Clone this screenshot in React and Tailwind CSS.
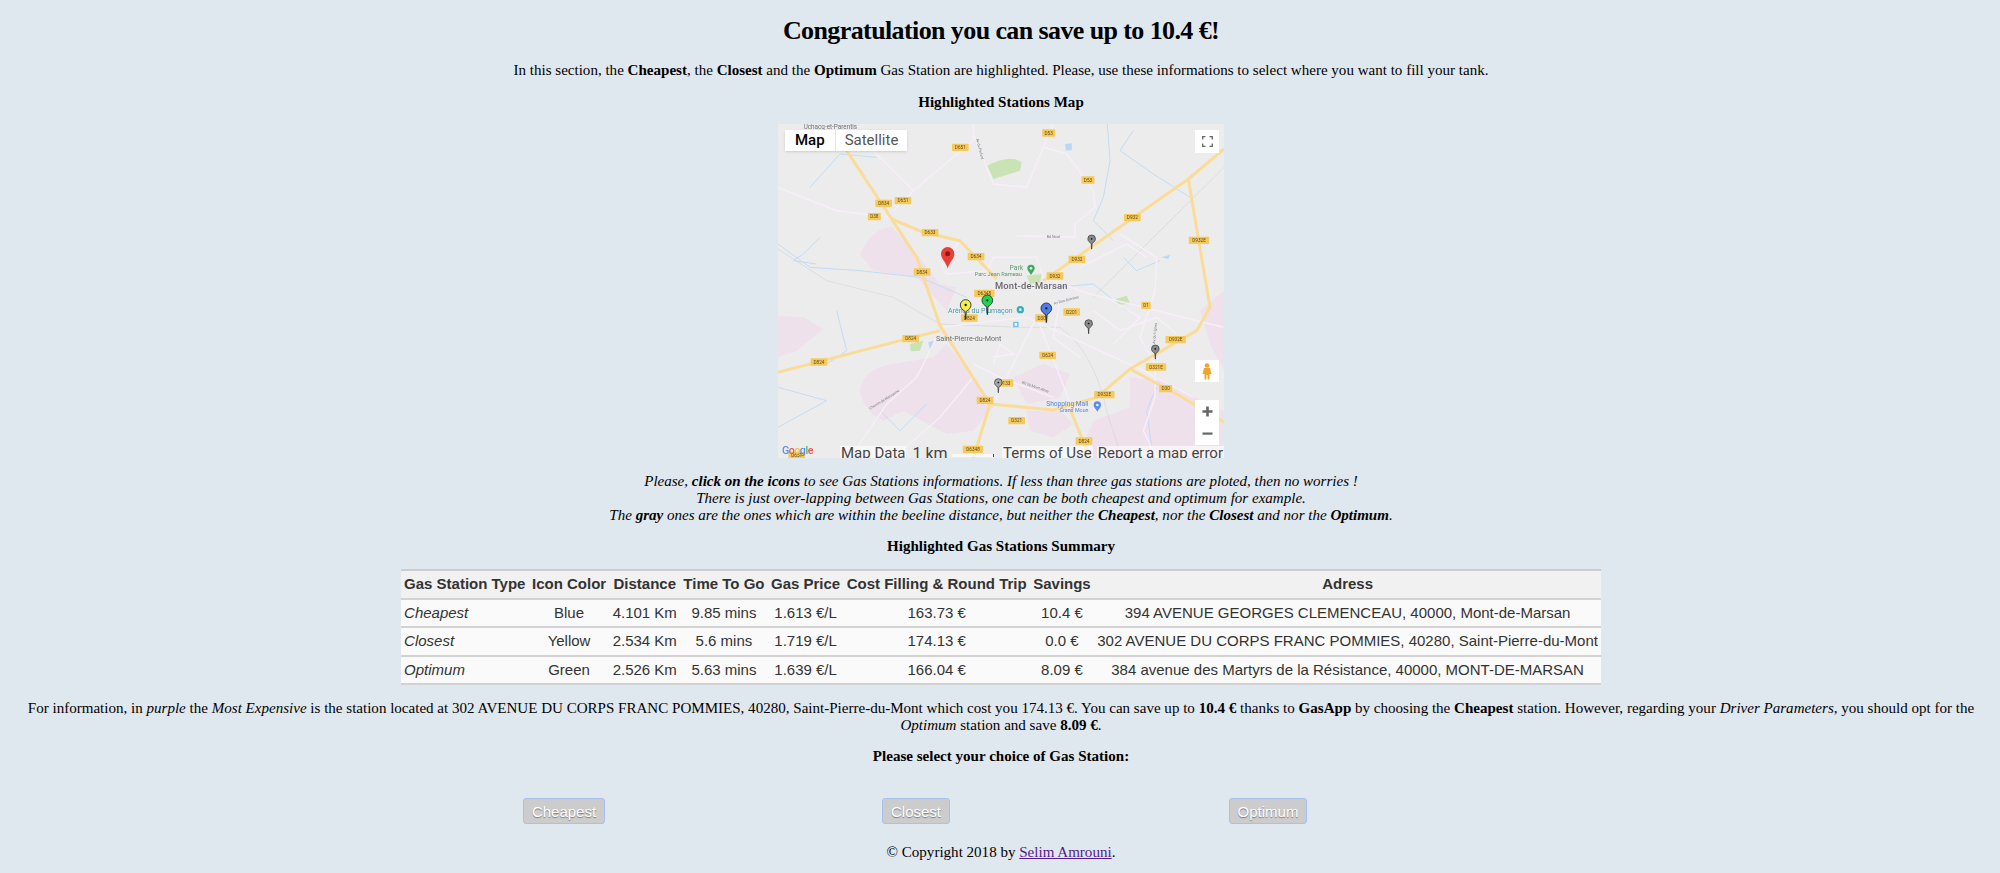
const rows = [
  ['Cheapest', 'Blue', '4.101 Km', '9.85 mins', '1.613 €/L', '163.73 €', '10.4 €', '394 AVENUE GEORGES CLEMENCEAU, 40000, Mont-de-Marsan'],
  ['Closest', 'Yellow', '2.534 Km', '5.6 mins', '1.719 €/L', '174.13 €', '0.0 €', '302 AVENUE DU CORPS FRANC POMMIES, 40280, Saint-Pierre-du-Mont'],
  ['Optimum', 'Green', '2.526 Km', '5.63 mins', '1.639 €/L', '166.04 €', '8.09 €', '384 avenue des Martyrs de la Résistance, 40000, MONT-DE-MARSAN'],
];
const heads = ['Gas Station Type', 'Icon Color', 'Distance', 'Time To Go', 'Gas Price', 'Cost Filling & Round Trip', 'Savings', 'Adress'];

// map is in 3x coordinates of the crop
const chips = [
  [601, 110, 'D651'], [866, 67, 'D53'], [984, 208, 'D53'], [371, 278, 'D834'], [429, 270, 'D651'], [343, 318, 'D38'],
  [510, 366, 'D633'], [648, 438, 'D634'], [486, 484, 'D834'], [951, 446, 'D932'], [885, 496, 'D932'], [1117, 321, 'D932'],
  [1317, 389, 'D932E'], [673, 548, 'D6348'], [935, 604, 'D201'], [1158, 584, 'D1'], [628, 622, 'D824'], [845, 622, 'D30'],
  [452, 684, 'D824'], [177, 754, 'D824'], [863, 734, 'D624'], [1247, 687, 'D932E'], [1188, 769, 'D321E'], [1217, 834, 'D30'],
  [735, 817, 'D133'], [1033, 852, 'D932E'], [675, 869, 'D824'], [770, 930, 'D321'], [972, 991, 'D824'], [639, 1016, 'D6348'], [110, 1034, 'D651'],
];

const pins = [
  [995, 378, '#8a8a8a', 0.72], [986, 632, '#8a8a8a', 0.72], [1186, 708, '#8a8a8a', 0.72], [715, 809, '#a5a5a5', 0.72],
  [617, 574, '#f4ee4e', 1], [682, 560, '#17d94f', 1], [859, 584, '#4f7de8', 1],
];

function GasMap() {
  return (
    <svg viewBox="54 40 1338 1002" className="block w-full h-full blur-[0.5px]" fontFamily="Roboto, sans-serif">
      <rect x="54" y="40" width="1338" height="1002" fill="#ececec" />

      <g fill="#eee1ec">
        <path d="M300 430 Q340 350 395 348 L470 430 L540 520 L590 530 L560 600 L470 500 L340 480 Z" />
        <path d="M54 615 L130 620 L190 655 L110 720 L54 740 Z" />
        <path d="M300 840 Q310 770 400 760 L520 740 L560 700 L640 800 L700 890 L690 900 L640 960 L560 970 L430 900 L370 930 Q310 900 300 840 Z" />
        <path d="M760 800 L850 760 L930 790 L900 860 L800 880 Z" />
        <path d="M800 900 L900 900 L940 940 L880 980 L810 960 Z" />
        <path d="M970 1000 L1000 930 L1110 890 L1110 800 L1200 810 L1392 900 L1392 1042 L1000 1042 Z" />
        <path d="M1320 600 L1392 540 L1392 780 L1350 700 Z" />
      </g>

      <g fill="#c9e3b5">
        <path d="M682 165 Q750 130 785 155 L780 180 L700 205 Z" />
        <path d="M450 700 L490 690 L480 720 L452 722 Z" />
        <path d="M1068 565 L1100 555 L1110 580 L1070 582 Z" />
        <path d="M800 495 L845 490 L840 515 L810 520 Z" />
      </g>

      <g fill="#b9d8f6">
        <path d="M915 100 L935 98 L936 118 L918 120 Z" />
        <path d="M505 695 L522 690 L512 725 Z" />
        <path d="M1205 440 L1230 432 L1225 445 Z" />
      </g>

      <g fill="none" stroke="#c3dcf5" strokeWidth="3">
        <path d="M1042 40 L1050 150 L1030 260 L1000 330 L1060 390" />
        <path d="M1120 60 L1080 120 L1180 190 L1290 260" />
        <path d="M54 400 L150 470 L300 480 L480 500 L620 560" />
        <path d="M180 380 L130 430 L100 450 L170 460" />
        <path d="M150 230 L240 130 L350 140" />
        <path d="M230 600 L260 720 L200 760" />
        <path d="M54 830 L200 870 L54 950" />
        <path d="M1090 440 L1130 480 L1200 450" />
        <path d="M1180 1042 L1160 900 L1190 830" />
        <path d="M360 900 L420 960 L500 880" />
        <path d="M890 530 L1000 520 L1100 600" />
      </g>

      <g fill="none" stroke="#cfcfd2" strokeWidth="1.5">
        <path d="M54 415 L200 510 L400 560 L540 640 L780 650 L900 650 Q1000 720 1040 900 L1085 1042" />
        <path d="M1000 560 L1392 170" />
      </g>

      <g fill="none" stroke="#f8eef9" strokeWidth="4.5">
        <path d="M54 230 L230 300 L390 320" />
        <path d="M460 240 L640 90 L640 40" />
        <path d="M640 70 L700 220 L800 230 L850 110 L880 40" />
        <path d="M850 110 L920 130 L1000 240 L1005 290 L945 340 L945 380 L770 375" />
        <path d="M340 120 L460 240 L400 300" />
        <path d="M700 440 L680 480 L560 490 L545 470 L600 390" />
        <path d="M700 440 L830 440 L850 500 L990 550 L1390 650" />
        <path d="M540 650 L800 620 L1150 780 L1300 860" />
        <path d="M830 620 L720 840 L700 880" />
        <path d="M830 620 L940 900" />
        <path d="M640 760 L720 800 L880 860" />
        <path d="M270 1042 L380 880 L470 800 L530 680" />
        <path d="M1080 370 L1190 440 L1185 540 L1140 680 L1185 760 L1185 860 L1150 960 L1190 1042" />
        <path d="M960 470 L1100 400 L1160 440" />
        <path d="M1000 600 L1080 660 L1190 620 L1250 670" />
        <path d="M1040 560 L1140 620 L1060 700" />
        <path d="M900 570 L880 680 L960 740" />
        <path d="M700 740 L760 730 L720 700 L700 760" />
        <path d="M400 1042 L540 920 L640 800" />
      </g>

      <g fill="none" stroke="#fadc98" strokeWidth="9" strokeLinejoin="round">
        <path d="M260 120 L395 325 L470 440 L540 645 L690 880 L640 1042" />
        <path d="M395 325 L490 365 L600 390 L710 505" />
        <path d="M54 785 L400 695 L540 660" />
        <path d="M690 880 L880 898 L1010 860 L1110 775 L1310 660 L1350 590 L1285 205" />
        <path d="M850 510 L1285 205 L1392 115" />
        <path d="M1110 775 L1250 850 L1392 935" />
        <path d="M930 895 L990 1042" />
      </g>

      {chips.map(([x, y, label], i) => (
        <g key={i}>
          <rect x={x - (label.length * 5.5 + 3)} y={y - 11} width={label.length * 11 + 6} height="22" rx="2" fill="#f6c95c" />
          <text x={x} y={y + 5} textAnchor="middle" fontSize="14" fill="#5e4a16">{label}</text>
        </g>
      ))}

      <text x="211" y="54" textAnchor="middle" fontSize="19" fill="#70707a">Uchacq-et-Parentis</text>
      <text x="814" y="536" textAnchor="middle" fontSize="28" fontWeight="500" letterSpacing="0.6" fill="#6b6570">Mont-de-Marsan</text>
      <text x="626" y="690" textAnchor="middle" fontSize="21.5" fill="#6d6d72">Saint-Pierre-du-Mont</text>
      <text x="769" y="478" textAnchor="middle" fontSize="20" fill="#5b9a6c">Park</text>
      <text x="715" y="497" textAnchor="middle" fontSize="17" fill="#5b9a6c">Parc Jean Rameau</text>
      <text x="661" y="608" textAnchor="middle" fontSize="21" fill="#4d9bb0">Arènes du Plumaçon</text>
      <text x="922" y="887" textAnchor="middle" fontSize="20" fill="#5b85dd">Shopping Mall</text>
      <text x="942" y="905" textAnchor="middle" fontSize="16" fill="#5b85dd">Grand Moun</text>
      <text x="880" y="383" textAnchor="middle" fontSize="11" fill="#77777c">Bd Nord</text>
      <text x="920" y="572" textAnchor="middle" fontSize="11" fill="#77777c" transform="rotate(-15 920 572)">Av Don Dominis</text>
      <text x="825" y="832" textAnchor="middle" fontSize="11" fill="#77777c" transform="rotate(20 825 832)">Bd de Mont Alma</text>
      <text x="375" y="870" textAnchor="middle" fontSize="11" fill="#77777c" transform="rotate(-32 375 870)">Chemin de Marsanne</text>
      <text x="1188" y="668" textAnchor="middle" fontSize="11" fill="#77777c" transform="rotate(-84 1188 668)">Av du Vignes</text>
      <text x="656" y="116" textAnchor="middle" fontSize="11" fill="#77777c" transform="rotate(75 656 116)">Av du Parlant</text>

      <path d="M813 462 a11 11 0 0 1 11 11 c0 8 -7 12 -11 20 c-4 -8 -11 -12 -11 -20 a11 11 0 0 1 11 -11z" fill="#3fa95e" />
      <circle cx="813" cy="473" r="4" fill="#ddf0df" />
      <circle cx="781" cy="597" r="11" fill="#3aa9bd" />
      <circle cx="781" cy="597" r="4" fill="#e5f5f7" />
      <path d="M1012 872 a11 11 0 0 1 11 11 c0 8 -7 12 -11 20 c-4 -8 -11 -12 -11 -20 a11 11 0 0 1 11 -11z" fill="#5b8cf0" />
      <circle cx="1012" cy="883" r="4" fill="#e3ecfd" />
      <rect x="759" y="633" width="17" height="17" rx="2" fill="#6cc6ee" />
      <rect x="764" y="637" width="7" height="8" fill="#ffffff" />

      {pins.map(([x, y, color, s], i) => (
        <g key={i} transform={`translate(${x} ${y}) scale(${s})`}>
          <path d="M0 52 L-2 28 C-9 24 -16 18 -16 9 A16 16 0 0 1 16 9 C16 18 9 24 2 28 Z" fill={color} stroke="#222222" strokeWidth="2.5" />
          <circle cx="0" cy="9" r="3.5" fill="#111111" />
        </g>
      ))}

      <path d="M563 473 C556 450 543 445 543 429 A20 20 0 0 1 583 429 C583 445 570 450 563 473 Z" fill="#ea3f36" />
      <circle cx="563" cy="429" r="7.5" fill="#8c1b16" />

      <text x="66" y="1030" fontSize="32" fontWeight="500" letterSpacing="-1.5" fontFamily="Roboto, sans-serif">
        <tspan fill="#5a8eea">G</tspan><tspan fill="#e8584c">o</tspan><tspan fill="#efbf3f">o</tspan><tspan fill="#5a8eea">g</tspan><tspan fill="#58b36c">l</tspan><tspan fill="#e8584c">e</tspan>
      </text>
    </svg>
  );
}

export default function App() {
  return (
    <div className="min-h-screen pl-[2px] bg-[#e0e8ef] text-black text-center text-[15.05px] leading-[17px] font-['Liberation_Serif',serif] overflow-hidden">
      <h1 className="pt-[15px] text-[26px] leading-[32px] font-bold tracking-[-0.6px]">Congratulation you can save up to 10.4 €!</h1>

      <p className="mt-[15px]">
        In this section, the <b>Cheapest</b>, the <b>Closest</b> and the <b>Optimum</b> Gas Station are highlighted. Please, use these informations to select where you want to fill your tank.
      </p>

      <h3 className="mt-[15px] font-bold">Highlighted Stations Map</h3>

      <div className="relative ml-[776px] mt-[13px] w-[446px] h-[334px] overflow-hidden">
        <GasMap />
        <div className="absolute left-[7px] top-[6px] flex h-[21px] bg-white shadow-sm font-['Roboto',sans-serif] text-[15px] leading-[21px]">
          <span className="px-[10px] font-medium text-black border-r border-[#e6e6e6]">Map</span>
          <span className="px-[9px] text-[#565656]">Satellite</span>
        </div>
        <div className="absolute right-[5px] top-[6px] flex h-[23px] w-[24px] items-center justify-center bg-white">
          <svg width="11" height="11" viewBox="0 0 11 11" fill="none" stroke="#666666" strokeWidth="1.3">
            <path d="M0.7 3.5 V0.7 H3.5 M7.5 0.7 H10.3 V3.5 M10.3 7.5 V10.3 H7.5 M3.5 10.3 H0.7 V7.5" />
          </svg>
        </div>
        <div className="absolute right-[5px] top-[236px] flex h-[22px] w-[24px] items-center justify-center bg-white">
          <svg width="10" height="17" viewBox="0 0 10 17" fill="#f0a52a">
            <circle cx="5" cy="2.5" r="2.3" />
            <path d="M2 5 H8 L9.5 11 H7.5 V16.5 H5.6 V12 H4.4 V16.5 H2.5 V11 H0.5 Z" />
          </svg>
        </div>
        <div className="absolute right-[5px] top-[276px] flex h-[45px] w-[24px] flex-col items-center justify-around bg-white">
          <svg width="11" height="11" viewBox="0 0 11 11" fill="#666666"><path d="M4.2 0.5 H6.8 V4.2 H10.5 V6.8 H6.8 V10.5 H4.2 V6.8 H0.5 V4.2 H4.2 Z" /></svg>
          <svg width="11" height="11" viewBox="0 0 11 11" fill="#666666"><path d="M0.5 4.5 H10.5 V6.7 H0.5 Z" /></svg>
        </div>
        <div className="absolute left-[62px] right-0 top-[322px] flex h-[12px] items-start justify-between overflow-hidden font-['Roboto',sans-serif] text-[15px] leading-[15px] text-[#444444]">
          <span className="bg-white/60 px-[1px]">Map Data</span>
          <span className="ml-[6px] flex flex-1 items-start text-[16px]">
            <span>1 km</span>
            <span className="ml-[4px] mt-[8px] h-[3px] w-[42px] border-r border-[#444444] bg-white/70"></span>
          </span>
          <span className="bg-white/60 px-[1px]">Terms of Use</span>
          <span className="ml-[4px] bg-white/60 px-[1px]">Report a map error</span>
        </div>
      </div>

      <p className="mt-[15px] italic">
        Please, <b>click on the icons</b> to see Gas Stations informations. If less than three gas stations are ploted, then no worries !<br />
        There is just over-lapping between Gas Stations, one can be both cheapest and optimum for example.<br />
        The <b>gray</b> ones are the ones which are within the beeline distance, but neither the <b>Cheapest</b>, nor the <b>Closest</b> and nor the <b>Optimum</b>.
      </p>

      <h3 className="mt-[14px] font-bold">Highlighted Gas Stations Summary</h3>

      <div className="mt-[14px] flex justify-center">
        <table className="border-collapse border-t-2 border-[#cccccc] font-['Liberation_Sans',sans-serif] text-[15px] leading-[20.5px] text-[#333333]">
          <thead>
            <tr className="bg-[#f1f1f1] border-b-2 border-[#d2d2d2]">
              {heads.map((h) => (
                <th key={h} className="px-[3.25px] py-[3px] font-bold whitespace-nowrap text-center">{h}</th>
              ))}
            </tr>
          </thead>
          <tbody>
            {rows.map((r) => (
              <tr key={r[0]} className="bg-[#fafafa] border-b-2 border-[#d2d2d2]">
                {r.map((c, i) => (
                  <td key={i} className={`px-[3.25px] py-[3px] whitespace-nowrap ${i === 0 ? 'text-left italic' : 'text-center'}`}>{c}</td>
                ))}
              </tr>
            ))}
          </tbody>
        </table>
      </div>

      <p className="mt-[15px] px-[6px]">
        For information, in <i>purple</i> the <i>Most Expensive</i> is the station located at 302 AVENUE DU CORPS FRANC POMMIES, 40280, Saint-Pierre-du-Mont which cost you 174.13 €. You can save up to <b>10.4 €</b> thanks to <b>GasApp</b> by choosing the <b>Cheapest</b> station. However, regarding your <i>Driver Parameters</i>, you should opt for the <i>Optimum</i> station and save <b>8.09 €</b>.
      </p>

      <h3 className="mt-[14px] font-bold">Please select your choice of Gas Station:</h3>

      <div className="ml-[386px] mt-[33px] grid w-[1056px] grid-cols-3 justify-items-center font-['Liberation_Sans',sans-serif] text-[15px] text-white">
        {['Cheapest', 'Closest', 'Optimum'].map((b) => (
          <button key={b} className="h-[26px] rounded-[3px] border border-[#a9c0ee] bg-[#cccccc] px-[8px] [text-shadow:0_1px_1px_rgba(0,0,0,0.4)]">{b}</button>
        ))}
      </div>

      <p className="mt-[20px]">
        © Copyright 2018 by <a href="#" className="text-[#551a8b] underline">Selim Amrouni</a>.
      </p>
    </div>
  );
}
